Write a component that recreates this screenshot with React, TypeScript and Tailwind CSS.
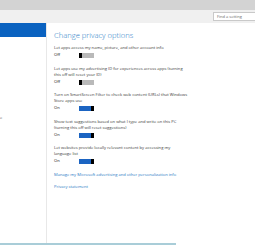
import React from "react";

function Toggle({ on }: { on: boolean }) {
  return on ? (
    <div className="flex h-[5px] w-[15px]">
      <div className="flex-1 bg-[#1b64c2]" />
      <div className="w-[3px] bg-black" />
    </div>
  ) : (
    <div className="flex h-[5px] w-[15px]">
      <div className="w-[3px] bg-black" />
      <div className="flex-1 bg-[#b9b9b9]" />
    </div>
  );
}

function Setting({ lines, on, first }: { lines: string[]; on: boolean; first?: boolean }) {
  return (
    <div className={first ? "mt-[5px]" : "mt-[6.5px]"}>
      {lines.map((l) => (
        <div key={l} className="h-[6px] leading-[6px] whitespace-nowrap text-[#3a3a3a]">
          {l}
        </div>
      ))}
      <div className="mt-[1px] flex h-[7px] items-center">
        <div className="w-[25px] text-[#1a1a1a]">{on ? "On" : "Off"}</div>
        <Toggle on={on} />
      </div>
    </div>
  );
}

export default function App() {
  return (
    <div
      className="flex h-[245px] w-[255px] flex-col overflow-hidden bg-white text-[4.1px]"
      style={{ fontFamily: '"Open Sans", "Noto Sans", sans-serif' }}
    >
      <div className="h-[10px] bg-[#d3d3d3]" />
      <div className="flex h-[13px] items-center justify-end bg-[#f0f0f0]">
        <div className="-mr-[3px] flex h-[9px] w-[45px] items-center border border-[#c9c9c9] bg-white pl-[3px] text-[4px] text-[#666]">
          Find a setting
        </div>
      </div>
      <div className="flex flex-1">
        <div className="flex w-[47px] flex-col border-r border-[#e8e8e8]">
          <div className="h-[14px] w-[46px] bg-[#0a62c0]" />
          <div className="mt-[79px] leading-none text-[#666]">e</div>
        </div>
        <div className="flex flex-col pl-[7px] pt-[7px]">
          <div className="h-[10px] whitespace-nowrap text-[7.6px] font-light leading-[10px] text-[#1f7cc6]">
            Change privacy options
          </div>
          <Setting first on={false} lines={["Let apps access my name, picture, and other account info"]} />
          <Setting
            on={false}
            lines={[
              "Let apps use my advertising ID for experiences across apps (turning",
              "this off will reset your ID)",
            ]}
          />
          <Setting
            on
            lines={[
              "Turn on SmartScreen Filter to check web content (URLs) that Windows",
              "Store apps use",
            ]}
          />
          <Setting
            on
            lines={[
              "Show text suggestions based on what I type and write on this PC",
              "(turning this off will reset suggestions)",
            ]}
          />
          <Setting
            on
            lines={[
              "Let websites provide locally relevant content by accessing my",
              "language list",
            ]}
          />
          <div className="mt-[7px] h-[6px] whitespace-nowrap leading-[6px] text-[#1f78c4]">
            Manage my Microsoft advertising and other personalization info
          </div>
          <div className="mt-[6px] h-[6px] whitespace-nowrap leading-[6px] text-[#1f78c4]">
            Privacy statement
          </div>
        </div>
      </div>
      <div className="h-[2px] w-[176px] bg-[#a9cdd8]" />
    </div>
  );
}
